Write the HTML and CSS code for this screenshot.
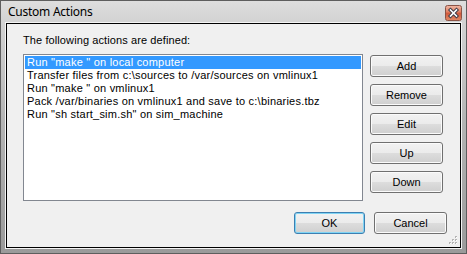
FILE: index.html
```html
<!DOCTYPE html>
<html>
<head>
<meta charset="utf-8">
<link rel="stylesheet" href="styles.css">
</head>
<body>
<div class="window">
  <div class="titlebar">
    <span class="title">Custom Actions</span>
    <div class="close">
      <svg width="17" height="16" viewBox="0 0 17 16">
        <defs>
          <linearGradient id="cg" x1="0" y1="0" x2="0" y2="1">
            <stop offset="0" stop-color="#f0b9a6"/>
            <stop offset="0.45" stop-color="#de7c5f"/>
            <stop offset="0.5" stop-color="#d0573a"/>
            <stop offset="1" stop-color="#e08a66"/>
          </linearGradient>
        </defs>
        <rect x="0.5" y="0.5" width="16" height="15" rx="2" fill="url(#cg)" stroke="#8a5346"/>
        <path d="M5.5 5 L11.5 11 M11.5 5 L5.5 11" stroke="#3b3b46" stroke-width="3.6" stroke-linecap="square"/>
        <path d="M5.5 5 L11.5 11 M11.5 5 L5.5 11" stroke="#ffffff" stroke-width="1.6" stroke-linecap="square"/>
      </svg>
    </div>
  </div>
  <div class="client">
    <div class="label">The following actions are defined:</div>
    <div class="main">
      <ul class="list">
        <li class="item selected">Run "make " on local computer</li>
        <li class="item">Transfer files from c:\sources to /var/sources on vmlinux1</li>
        <li class="item">Run "make " on vmlinux1</li>
        <li class="item">Pack /var/binaries on vmlinux1 and save to c:\binaries.tbz</li>
        <li class="item">Run "sh start_sim.sh" on sim_machine</li>
      </ul>
      <div class="side">
        <button class="btn side-btn">Add</button>
        <button class="btn side-btn">Remove</button>
        <button class="btn side-btn">Edit</button>
        <button class="btn side-btn">Up</button>
        <button class="btn side-btn">Down</button>
      </div>
    </div>
    <div class="footer">
      <button class="btn ok">OK</button>
      <button class="btn cancel">Cancel</button>
    </div>
    <svg class="grip" width="9" height="9" viewBox="0 0 9 9">
      <g fill="#b4b4b4">
        <rect x="6" y="0" width="2" height="2"/>
        <rect x="3" y="3" width="2" height="2"/>
        <rect x="6" y="3" width="2" height="2"/>
        <rect x="0" y="6" width="2" height="2"/>
        <rect x="3" y="6" width="2" height="2"/>
        <rect x="6" y="6" width="2" height="2"/>
      </g>
      <g fill="#ffffff">
        <rect x="7" y="1" width="1" height="1"/>
        <rect x="4" y="4" width="1" height="1"/>
        <rect x="7" y="4" width="1" height="1"/>
        <rect x="1" y="7" width="1" height="1"/>
        <rect x="4" y="7" width="1" height="1"/>
        <rect x="7" y="7" width="1" height="1"/>
      </g>
    </svg>
  </div>
</div>
</body>
</html>
```

FILE: styles.css
```css
html, body {
  margin: 0;
  padding: 0;
  background: #ffffff;
}

.window {
  box-sizing: border-box;
  width: 467px;
  height: 254px;
  border: 1px solid #5e5e5e;
  background: linear-gradient(#dedede 0px, #d2d2d2 22px, #b4b4b4 120px, #9a9a9a 254px);
  display: flex;
  flex-direction: column;
}

.titlebar {
  height: 22px;
  display: flex;
  align-items: flex-start;
  flex: none;
}

.title {
  font-family: "Noto Sans", "Open Sans", sans-serif;
  font-size: 12px;
  letter-spacing: -0.25px;
  line-height: 22px;
  color: #000;
  padding-left: 7px;
}

.close {
  margin-left: auto;
  margin-right: 4px;
  margin-top: 4px;
  width: 17px;
  height: 16px;
}

.close svg {
  display: block;
}

.client {
  position: relative;
  box-sizing: border-box;
  margin: 0 5px 5px 5px;
  height: 225px;
  border: 1px solid #000;
  box-shadow: 0 0 0 1px #f4f4f4;
  background: #f0f0f0;
  padding: 9px 0 0 16px;
  font-family: "Liberation Sans", Arial, sans-serif;
  font-size: 11px;
  color: #000;
}

.label {
  line-height: 13px;
  height: 13px;
  margin-top: 1px;
  letter-spacing: 0.1px;
}

.main {
  display: flex;
  margin-top: 7px;
}

.list {
  box-sizing: border-box;
  width: 340px;
  height: 147px;
  margin: 0;
  padding: 1px;
  list-style: none;
  background: #fff;
  border: 1px solid #828790;
}

.item {
  height: 13px;
  line-height: 13px;
  padding-left: 2px;
  white-space: nowrap;
  letter-spacing: 0.22px;
}

.item.selected {
  background: #3399ff;
  color: #fff;
}

.side {
  display: flex;
  flex-direction: column;
  gap: 7px;
  margin-left: 7px;
  margin-top: 1px;
}

.btn {
  box-sizing: border-box;
  height: 22px;
  margin: 0;
  padding: 0;
  border: 1px solid #707070;
  border-radius: 3px;
  background: linear-gradient(#f2f2f2 0%, #ebebeb 50%, #dddddd 50%, #cfcfcf 100%);
  box-shadow: inset 0 0 0 1px #fbfbfb;
  font-family: "Liberation Sans", Arial, sans-serif;
  font-size: 11px;
  color: #000;
  line-height: 20px;
  text-align: center;
}

.side-btn {
  width: 73px;
}

.footer {
  display: flex;
  justify-content: flex-end;
  gap: 9px;
  margin-top: 11px;
  padding-right: 13px;
}

.ok {
  width: 71px;
  border-color: #3c7fb1;
  box-shadow: inset 0 0 0 1px #80d4f4;
}

.cancel {
  width: 73px;
}

.grip {
  position: absolute;
  right: 2px;
  bottom: 2px;
  display: block;
}
```
